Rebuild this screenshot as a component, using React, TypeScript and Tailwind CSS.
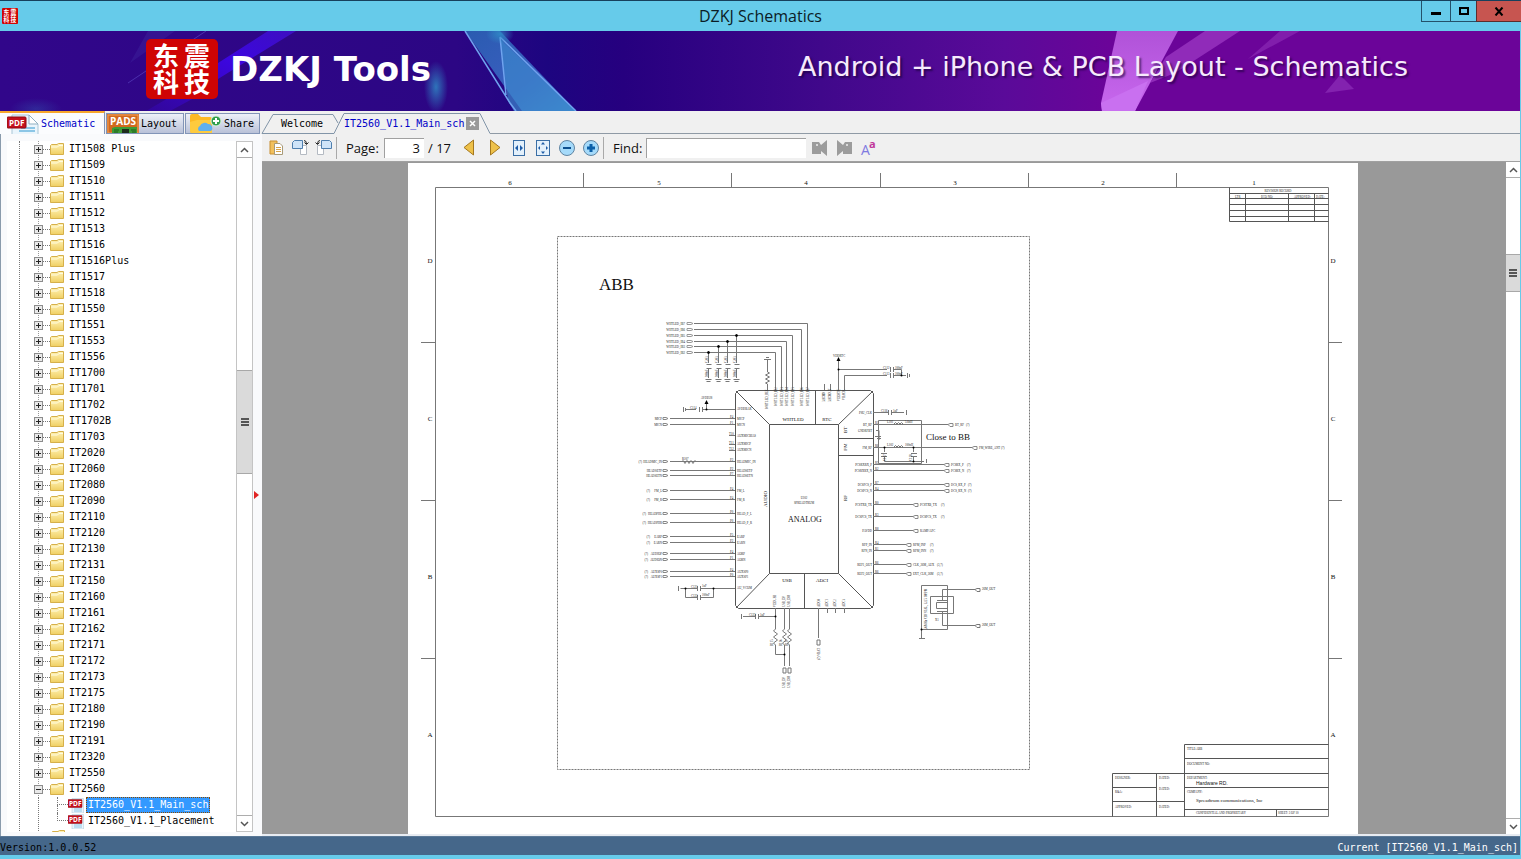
import React, { useState } from 'react';

const folders = [
  'IT1508 Plus', 'IT1509', 'IT1510', 'IT1511', 'IT1512', 'IT1513', 'IT1516', 'IT1516Plus', 'IT1517', 'IT1518',
  'IT1550', 'IT1551', 'IT1553', 'IT1556', 'IT1700', 'IT1701', 'IT1702', 'IT1702B', 'IT1703', 'IT2020',
  'IT2060', 'IT2080', 'IT2090', 'IT2110', 'IT2120', 'IT2130', 'IT2131', 'IT2150', 'IT2160', 'IT2161',
  'IT2162', 'IT2171', 'IT2172', 'IT2173', 'IT2175', 'IT2180', 'IT2190', 'IT2191', 'IT2320', 'IT2550', 'IT2560',
];
const files = ['IT2560_V1.1_Main_sch', 'IT2560_V1.1_Placement'];

const Seal = ({ className }: { className: string }) => (
  <svg viewBox="0 0 72 60" preserveAspectRatio="none" className={`overflow-visible ${className}`} aria-hidden="true">
    <rect width="72" height="60" rx="5" fill="#cf0404" />
    <g fill="#fff" fontSize="26" fontWeight="700" fontFamily="'Noto Sans CJK SC', sans-serif">
      <text x="7" y="27">东</text>
      <text x="38" y="27">震</text>
      <text x="7" y="53">科</text>
      <text x="38" y="53">技</text>
    </g>
  </svg>
);

const FolderIcon = () => (
  <svg width="15" height="14" viewBox="0 0 15 14" aria-hidden="true">
    <defs>
      <linearGradient id="fold" x1="0" y1="0" x2="0" y2="1">
        <stop offset="0" stopColor="#fff3b8" />
        <stop offset="1" stopColor="#f0cf62" />
      </linearGradient>
    </defs>
    <path d="M.5 12.5V3.5L1.5 2.5H7L8.500 1.500H13.500V12.500Z" fill="url(#fold)" stroke="#d6b04a" />
    <path d="M1 5H7.500L9 3.500H13" fill="none" stroke="#fffbe0" />
  </svg>
);

const PdfIcon = ({ big }: { big?: boolean }) => (
  <svg width={big ? 32 : 16} height={big ? 20 : 15} viewBox={big ? '0 0 32 20' : '0 0 32 30'} className="shrink-0" aria-hidden="true">
    <path d={big ? 'M5 1H22L31 10V30H5Z' : 'M8 1H31V30H8Z'} fill="#eaf5fc" stroke="#a9c6d6" />
    {big && <path d="M22 1L31 10H22Z" fill="#fff" stroke="#8fb0c2" />}
    <path d="M14 14H28M12 17H28M12 22H28M12 26H28" stroke="#8cc6e6" strokeWidth="2" />
    <rect x="0" y="3" width={big ? 19 : 28} height={big ? 11 : 16} rx="1" fill="#c4101c" stroke="#8d0a12" />
    <text x="2" y={big ? 12 : 16} fill="#fff" fontSize={big ? 8 : 13} fontWeight="700" fontFamily="'Open Sans', sans-serif">PDF</text>
  </svg>
);

const PadsIcon = () => (
  <svg width="32" height="20" viewBox="0 0 32 20" className="shrink-0" aria-hidden="true">
    <rect width="32" height="20" fill="#d2691e" />
    <rect x="1" y="1" width="30" height="18" fill="none" stroke="#f2a25a" />
    <text x="3" y="11" fill="#fff" fontSize="10" fontWeight="700" fontFamily="'Open Sans', sans-serif">PADS</text>
    <path d="M5 20V14L8 13H30V20Z" fill="#3d9a35" />
    <rect x="15" y="15" width="7" height="5" fill="#1c2b1c" />
    <path d="M7 16H12M7 18H11M24 16H29M25 18H29" stroke="#1f5f1d" />
  </svg>
);

const ShareIcon = () => (
  <svg width="32" height="19" viewBox="0 0 32 19" className="shrink-0" aria-hidden="true">
    <path d="M0 2Q0 0 2 0H8L11 3H20Q22 3 22 5V19H2Q0 19 0 17Z" fill="#fdb924" />
    <path d="M0 8L7 6H22V19H2Q0 19 0 17Z" fill="#fecb3e" />
    <path d="M9 17a3 3 0 0 1 1-5a5 5 0 0 1 8-2a4 4 0 0 1 3 7Z" fill="#5fb0ee" />
    <circle cx="26" cy="7" r="5" fill="#2f9e4a" stroke="#d9f2de" />
    <path d="M26 4V10M23 7H29" stroke="#fff" strokeWidth="2" />
  </svg>
);

const Chevron = ({ up }: { up?: boolean }) => (
  <svg width="9" height="6" viewBox="0 0 9 6" aria-hidden="true">
    <path d={up ? 'M1 5L4.500 1.500L8 5' : 'M1 1L4.500 4.500L8 1'} fill="none" stroke="#555" strokeWidth="1.500" />
  </svg>
);

const ScrollBar = ({ className, before, thumb }: { className: string; before: string; thumb: string }) => (
  <div className={`flex flex-col bg-white shrink-0 ${className}`}>
    <button aria-label="Scroll up" className="h-4 shrink-0 flex items-center justify-center border-b border-[#adadad]"><Chevron up /></button>
    <div className={before} />
    <div className={`${thumb} flex flex-col items-center justify-center gap-px bg-[#dadada] border-y border-[#a8a8a8] shrink-0`}>
      <i className="w-2 h-0.5 bg-[#555]" />
      <i className="w-2 h-0.5 bg-[#555]" />
      <i className="w-2 h-0.5 bg-[#555]" />
    </div>
    <div className="flex-1" />
    <button aria-label="Scroll down" className="h-4 shrink-0 flex items-center justify-center border-t border-[#adadad]"><Chevron /></button>
  </div>
);

const TitleBar = () => (
  <div className="h-[31px] shrink-0 grid grid-cols-[1fr_auto_1fr] bg-[#66cbea] border-t border-[#17405c]">
    <div className="flex items-center pl-0.5"><Seal className="w-4 h-4" /></div>
    <h1 className="self-center text-base leading-5 text-[#0b1c26]">DZKJ Schematics</h1>
    <div className="flex justify-end items-start">
      <button aria-label="Minimize" className="w-[29px] h-[21px] border-l border-b border-[#24516a] flex items-center justify-center">
        <svg width="10" height="9" aria-hidden="true"><rect y="5" width="10" height="3" fill="#000" /></svg>
      </button>
      <button aria-label="Maximize" className="w-[26px] h-[21px] border-l border-b border-[#24516a] flex items-center justify-center">
        <svg width="10" height="8" aria-hidden="true"><rect x="1" y="1" width="8" height="6" fill="none" stroke="#000" strokeWidth="2" /></svg>
      </button>
      <button aria-label="Close" className="w-[45px] h-[21px] border-l border-b border-[#5c2d2d] bg-[#c75550] flex items-center justify-center">
        <svg width="10" height="9" viewBox="0 0 10 9" aria-hidden="true"><path d="M1.500 .5L8.500 8.500M8.500 .5L1.500 8.500" stroke="#000" strokeWidth="2" /></svg>
      </button>
    </div>
  </div>
);

const Banner = () => (
  <header className="relative h-20 shrink-0 overflow-hidden bg-[#6b0499] flex items-center justify-between pl-[146px] pr-[112px]">
    <svg viewBox="0 0 1521 80" preserveAspectRatio="xMinYMin slice" className="absolute inset-0 w-full h-full" aria-hidden="true">
      <defs>
        <linearGradient id="sky">
          <stop offset="0" stopColor="#31068a" />
          <stop offset=".3" stopColor="#2c0684" />
          <stop offset=".36" stopColor="#1d0580" />
          <stop offset=".41" stopColor="#26007f" />
          <stop offset=".54" stopColor="#40088b" />
          <stop offset=".66" stopColor="#5a0a99" />
          <stop offset=".73" stopColor="#6b0499" />
          <stop offset="1" stopColor="#6b0499" />
        </linearGradient>
        <linearGradient id="shardL" x1="0" y1="0" x2="1" y2="1">
          <stop offset="0" stopColor="#2a5bb0" />
          <stop offset=".6" stopColor="#3a5fc0" />
          <stop offset="1" stopColor="#3f8fd0" />
        </linearGradient>
        <linearGradient id="shardR" x1="0" y1="0" x2="0" y2="1">
          <stop offset="0" stopColor="#b052d8" />
          <stop offset="1" stopColor="#c868ee" />
        </linearGradient>
        <linearGradient id="beam" x1="1" y1="0" x2="0" y2="1">
          <stop offset="0" stopColor="#3d0fc0" />
          <stop offset=".4" stopColor="#3c06e0" />
          <stop offset="1" stopColor="#3c06e0" stopOpacity=".2" />
        </linearGradient>
        <radialGradient id="glow">
          <stop offset="0" stopColor="#2f8fc8" stopOpacity=".8" />
          <stop offset="1" stopColor="#2f8fc8" stopOpacity="0" />
        </radialGradient>
      </defs>
      <rect width="1521" height="80" fill="url(#sky)" />
      <path d="M268 0H296L218 48V32ZM146 80L170 66H196L170 80Z" fill="url(#beam)" />
      <path d="M148 0H175L130 32Z" fill="#3a1c98" opacity=".6" />
      <path d="M206 0L128 52" stroke="#4c2fae" />
      <ellipse cx="436" cy="56" rx="12" ry="26" fill="url(#glow)" />
      <ellipse cx="36" cy="78" rx="26" ry="11" fill="url(#glow)" opacity=".3" />
      <path d="M465 0H500L576 80H522Z" fill="url(#shardL)" />
      <path d="M500 8L508 70L514 80H576Z" fill="#3c86cc" opacity=".7" />
      <path d="M465 0L510 72L516 80M500 6L576 80M500 6L506 64" fill="none" stroke="#6fa3ee" strokeWidth="1.500" />
      <ellipse cx="500" cy="3" rx="14" ry="10" fill="url(#glow)" />
      <path d="M1117 0H1178L1135 80H1102L1101 72Z" fill="url(#shardR)" />
      <path d="M1101 72L1148 50L1135 80H1102Z" fill="#c970f0" />
      <path d="M1205 0H1240L1175 42L1150 52L1166 26Z" fill="#a03cc6" opacity=".7" />
      <path d="M1280 0H1300L1248 28Z" fill="#8a2ab4" opacity=".7" />
      <path d="M1340 44L1354 58L1325 62Z" fill="#8a2ab4" opacity=".8" />
    </svg>
    <div className="relative flex items-center gap-3 pb-1">
      <Seal className="w-[72px] h-[60px]" />
      <span className="font-['DejaVu_Sans',sans-serif] font-bold text-[34px] leading-10 text-white">DZKJ Tools</span>
    </div>
    <p className="relative font-['DejaVu_Sans',sans-serif] text-[27px] leading-8 text-[#f6eafc] whitespace-nowrap [text-shadow:2px_2px_2px_rgba(20,0,50,.6)] pb-2">
      Android + iPhone &amp; PCB Layout - Schematics
    </p>
  </header>
);

const sideTabs = [
  { name: 'Schematic', icon: <PdfIcon big />, width: 'w-[105px]' },
  { name: 'Layout', icon: <PadsIcon />, width: 'w-[78px]' },
  { name: 'Share', icon: <ShareIcon />, width: 'w-[75px]' },
];

const Sidebar = () => {
  const [tab, setTab] = useState('Schematic');
  const [selected, setSelected] = useState(files[0]);

  return (
    <aside className="w-[262px] shrink-0 flex flex-col bg-[#f0f0f0]">
      <div className="flex items-end gap-px h-[23px] shrink-0">
        {sideTabs.map((t) => (
          <button
            key={t.name}
            onClick={() => setTab(t.name)}
            className={`${t.width} flex items-center overflow-hidden whitespace-nowrap font-['DejaVu_Sans_Mono',monospace] text-[10px] leading-4 ${tab === t.name
              ? 'h-[23px] gap-0.5 pl-[7px] bg-[#fbfcfe] border-t-2 border-[#f7a62c] border-r border-r-[#8295b8] text-[#0000c8]'
              : 'h-[21px] gap-0.5 bg-linear-to-b from-[#eef1f8] to-[#b9c1d8] border border-[#8295b8] text-black'
              } ${t.name === 'Share' ? 'pl-1' : ''}`}
          >
            {t.icon}
            <span>{t.name}</span>
          </button>
        ))}
      </div>
      <div className="flex flex-1 min-h-0 border-l border-[#8a9bac] bg-[#f9fafc] pt-[7px] pb-1">
        <div className="flex-1 min-w-0 ml-1.5 bg-white overflow-hidden font-['DejaVu_Sans_Mono',monospace] text-[10px] leading-4 text-black">
          <div className="ml-3 border-l border-dotted border-[#777]">
            <ul>
              {folders.map((name) => {
                const open = name === 'IT2560';
                return (
                  <li key={name} className="flex items-center h-4 ml-[18px] bg-[linear-gradient(#999_50%,transparent_50%)] bg-[size:1px_2px] bg-repeat-y">
                    <button aria-label={`${open ? 'Collapse' : 'Expand'} ${name}`} className="w-[9px] h-[9px] -ml-1 mt-px shrink-0 bg-[#e9e9e9] border border-[#8c8c8c] flex items-center justify-center">
                      <svg width="5" height="5" aria-hidden="true"><path d={open ? 'M0 2.500H5' : 'M0 2.500H5M2.500 0V5'} stroke="#222" /></svg>
                    </button>
                    <i className="w-[7px] border-t border-dotted border-[#777]" />
                    <FolderIcon />
                    <span className="ml-1">{name}</span>
                  </li>
                );
              })}
            </ul>
            <ul className="ml-[18px] border-l border-dotted border-[#777]">
              {files.map((name) => (
                <li key={name} className="flex items-center h-4 ml-[18px]">
                  <i className="w-[11px] h-4 shrink-0 flex flex-col">
                    <i className="h-2 border-l border-b border-dotted border-[#777]" />
                    <i className={name === files[0] ? 'h-2 border-l border-dotted border-[#777]' : 'h-2'} />
                  </i>
                  <PdfIcon />
                  <button
                    onClick={() => setSelected(name)}
                    className={`ml-0.5 px-px h-4 leading-[14px] border border-dotted ${selected === name ? 'bg-[#3399ff] text-white border-[#8a4a00]' : 'border-transparent'}`}
                  >
                    {name}
                  </button>
                </li>
              ))}
              <li className="h-1 overflow-hidden pl-3"><FolderIcon /></li>
            </ul>
          </div>
        </div>
        <ScrollBar className="w-[17px] border border-[#c4c4c4]" before="h-[212px]" thumb="h-[104px]" />
        <div className="w-[9px] shrink-0 flex items-center">
          <svg width="5" height="8" viewBox="0 0 5 8" className="ml-px mt-4" aria-hidden="true"><path d="M0 0L5 4L0 8Z" fill="#e02424" /></svg>
        </div>
      </div>
    </aside>
  );
};

const DocTabs = () => (
  <div className="flex items-end h-[23px] shrink-0 font-['DejaVu_Sans_Mono',monospace] text-[10px] leading-4">
    <button className="relative w-[72px] h-[21px] pl-[19px] text-left text-black">
      <svg viewBox="0 0 72 21" className="absolute inset-0 overflow-visible" aria-hidden="true">
        <path d="M0 20.500L11 1.500H71L76 10" fill="none" stroke="#8295a8" />
        <path d="M0 20.500H72" stroke="#8295a8" />
      </svg>
      <span className="relative">Welcome</span>
    </button>
    <div className="relative w-[156px] h-[21px] flex items-center gap-px pl-[10px] text-[#0000c8]">
      <svg viewBox="0 0 156 21" className="absolute inset-0" aria-hidden="true">
        <path d="M0 20.500L10 .5H146L156 20.500" fill="none" stroke="#8295a8" />
      </svg>
      <button className="relative">IT2560_V1.1_Main_sch</button>
      <button aria-label="Close tab" className="relative ml-px w-[13px] h-[13px] bg-[#999] flex items-center justify-center">
        <svg width="7" height="7" aria-hidden="true"><path d="M1 1L6 6M6 1L1 6" stroke="#fff" strokeWidth="1.500" /></svg>
      </button>
    </div>
    <div className="flex-1 border-b border-[#8f9aa5]" />
  </div>
);

const iconBtn = 'w-6 h-6 flex items-center justify-center shrink-0';

const Toolbar = () => {
  const [page, setPage] = useState('3');
  const [query, setQuery] = useState('');

  return (
    <div className="flex items-center h-[27px] shrink-0 pl-0.5 bg-[#f0f0f0] text-[13px] leading-5 text-[#111]">
      <button aria-label="Open file" className={iconBtn}>
        <svg width="16" height="16" viewBox="0 0 16 16" aria-hidden="true">
          <path d="M2 1H9V14H2Z" fill="#f2c05c" stroke="#c88f30" />
          <path d="M6.500 3.500H12L14.500 6V14.500H6.500Z" fill="#fff" stroke="#a89a78" />
          <path d="M8 7.500H13M8 9.500H13M8 11.500H13" stroke="#d9a54a" />
        </svg>
      </button>
      <button aria-label="Rotate right" className={iconBtn}>
        <svg width="18" height="17" viewBox="0 0 18 17" aria-hidden="true">
          <path d="M9.500 6.500H15.500V15.500H9.500Z" fill="#fff" stroke="#b4bac2" />
          <path d="M3.500 1.500H11.500V9.500H1.500V3.500Z" fill="#cfe4f8" stroke="#4f7fae" />
          <path d="M13 1.500Q15.500 1.500 15.500 5M13.500 3.500L15.500 5.500L17.500 3.500" fill="none" stroke="#222" />
        </svg>
      </button>
      <button aria-label="Rotate left" className={iconBtn}>
        <svg width="18" height="17" viewBox="0 0 18 17" aria-hidden="true">
          <path d="M2.500 6.500H8.500V15.500H2.500Z" fill="#fff" stroke="#b4bac2" />
          <path d="M6.500 1.500H14.500L16.500 3.500V9.500H6.500Z" fill="#cfe4f8" stroke="#4f7fae" />
          <path d="M5 1.500Q2.500 1.500 2.500 5M.5 3.500L2.500 5.500L4.500 3.500" fill="none" stroke="#222" />
        </svg>
      </button>
      <div className="w-px h-[22px] bg-[#a9a9a9]" />
      <label htmlFor="page" className="w-[38px] ml-[9px]">Page:</label>
      <input
        id="page"
        value={page}
        onChange={(e) => setPage(e.target.value)}
        className="w-10 h-5 bg-white border-l border-t border-[#a0a0a0] text-right pr-1 outline-none"
      />
      <span className="w-[29px] ml-1 whitespace-nowrap">/ 17</span>
      <button aria-label="Previous page" className={iconBtn}>
        <svg width="12" height="17" viewBox="0 0 12 17" aria-hidden="true"><path d="M10.500 1V16L1 8.500Z" fill="#eec14a" stroke="#a5781e" /></svg>
      </button>
      <button aria-label="Next page" className={`${iconBtn} ml-0.5`}>
        <svg width="12" height="17" viewBox="0 0 12 17" aria-hidden="true"><path d="M1.500 1V16L11 8.500Z" fill="#eec14a" stroke="#a5781e" /></svg>
      </button>
      <button aria-label="Fit width" className={iconBtn}>
        <svg width="12" height="16" viewBox="0 0 12 16" aria-hidden="true">
          <rect x=".5" y=".5" width="11" height="15" fill="#e3f0fb" stroke="#3a6ea5" />
          <path d="M5 5V11L2 8ZM7 5V11L10 8Z" fill="#1e5ca8" />
        </svg>
      </button>
      <button aria-label="Fit page" className={iconBtn}>
        <svg width="14" height="16" viewBox="0 0 14 16" aria-hidden="true">
          <rect x=".5" y=".5" width="13" height="15" fill="#e3f0fb" stroke="#3a6ea5" />
          <path d="M7 2L9 4.500H5ZM7 14L9 11.500H5ZM2 8L4 6V10ZM12 8L10 6V10Z" fill="#1e5ca8" />
        </svg>
      </button>
      <button aria-label="Zoom out" className={iconBtn}>
        <svg width="16" height="16" viewBox="0 0 16 16" aria-hidden="true">
          <circle cx="8" cy="8" r="7.500" fill="#a5dafa" stroke="#5f84a2" />
          <path d="M4 8H12" stroke="#0b4f8f" strokeWidth="2" />
        </svg>
      </button>
      <button aria-label="Zoom in" className={iconBtn}>
        <svg width="16" height="16" viewBox="0 0 16 16" aria-hidden="true">
          <circle cx="8" cy="8" r="7.500" fill="#a5dafa" stroke="#5f84a2" />
          <path d="M4 8H12M8 4V12" stroke="#0b5fa8" strokeWidth="3" />
        </svg>
      </button>
      <div className="w-px h-[22px] bg-[#a9a9a9]" />
      <label htmlFor="find" className="w-[33px] ml-[9px]">Find:</label>
      <input
        id="find"
        value={query}
        onChange={(e) => setQuery(e.target.value)}
        className="w-40 h-5 bg-white border-l border-t border-[#a0a0a0] px-1 outline-none"
      />
      <button aria-label="Find previous" className={`${iconBtn} ml-0.5`}>
        <svg width="16" height="16" viewBox="0 0 16 16" aria-hidden="true">
          <path d="M0 2H7L9 5L15 0V16L9 11V14H0Z" fill="#9c9c9c" /><circle cx="5" cy="5" r="1" fill="#eee" />
        </svg>
      </button>
      <button aria-label="Find next" className={iconBtn}>
        <svg width="16" height="16" viewBox="0 0 16 16" aria-hidden="true">
          <path d="M16 2H9L7 5L1 0V16L7 11V14H16Z" fill="#9c9c9c" /><circle cx="11" cy="5" r="1" fill="#eee" />
        </svg>
      </button>
      <button aria-label="Match case" className={iconBtn}>
        <svg width="15" height="16" viewBox="0 0 15 16" className="overflow-visible" aria-hidden="true">
          <text x="0" y="15" fontSize="14" fill="#7f7ae0" fontFamily="'Open Sans', sans-serif">A</text>
          <text x="8" y="8" fontSize="11" fontWeight="700" fill="#c0379a" fontFamily="'Open Sans', sans-serif">a</text>
        </svg>
      </button>
    </div>
  );
};

/* ---- schematic sheet ---- */

type Net = { y: number; x: number; pin: string; net: string; ref?: string; refX?: number };

const ledNets = [
  { y: 323.5, x: 807.5, name: 'WHTLED_IB7' },
  { y: 329.5, x: 801.5, name: 'WHTLED_IB6' },
  { y: 335.5, x: 792.5, name: 'WHTLED_IB5' },
  { y: 341.5, x: 786.5, name: 'WHTLED_IB4' },
  { y: 346.5, x: 781.5, name: 'WHTLED_IB3' },
  { y: 352.5, x: 775.5, name: 'WHTLED_IB2' },
];

const leftNets: Net[] = [
  { y: 418.5, x: 668, pin: 'MICP', net: 'MICP' },
  { y: 424.5, x: 668, pin: 'MICN', net: 'MICN' },
  { y: 461.5, x: 668, pin: 'HEADMIC_IN', net: 'HEADMIC_IN', ref: '(7)', refX: 642 },
  { y: 470.5, x: 668, pin: 'HEADSETP', net: 'HEADSETP' },
  { y: 475.5, x: 668, pin: 'HEADSETN', net: 'HEADSETN' },
  { y: 490.5, x: 668, pin: 'FM_L', net: 'FM_L', ref: '(7)', refX: 650 },
  { y: 499.5, x: 668, pin: 'FM_R', net: 'FM_R', ref: '(7)', refX: 650 },
  { y: 513.5, x: 668, pin: 'HEAD_P_L', net: 'HEADPHL', ref: '(7)', refX: 646 },
  { y: 522.5, x: 668, pin: 'HEAD_P_R', net: 'HEADPHR', ref: '(7)', refX: 646 },
  { y: 536.5, x: 668, pin: 'EARP', net: 'EARP', ref: '(7)', refX: 650 },
  { y: 542.5, x: 668, pin: 'EARN', net: 'EARN', ref: '(7)', refX: 650 },
  { y: 553.5, x: 668, pin: 'AORP', net: 'AUDIOP', ref: '(7)', refX: 648 },
  { y: 559.5, x: 668, pin: 'AORN', net: 'AUDION', ref: '(7)', refX: 648 },
  { y: 571.5, x: 668, pin: 'AUXSP0', net: 'AUXSP0', ref: '(7)', refX: 648 },
  { y: 576.5, x: 668, pin: 'AUXSP1', net: 'AUXSP1', ref: '(7)', refX: 648 },
];

const rightNets: Net[] = [
  { y: 424.5, x: 948, pin: 'BT_RF', net: 'BT_RF', ref: '(7)', refX: 966 },
  { y: 447.5, x: 972, pin: 'FM_RF', net: 'FM_WIRE_ANT', ref: '(7)', refX: 1001 },
  { y: 464.5, x: 944, pin: 'PCSRXRX_P', net: 'PCSRX_P', ref: '(7)', refX: 967 },
  { y: 470.5, x: 944, pin: 'PCSRXRX_N', net: 'PCSRX_N', ref: '(7)', refX: 967 },
  { y: 484.5, x: 944, pin: 'DCSPCS_P', net: 'DCS_RX_P', ref: '(7)', refX: 968 },
  { y: 490.5, x: 944, pin: 'DCSPCS_N', net: 'DCS_RX_N', ref: '(7)', refX: 968 },
  { y: 504.5, x: 913, pin: 'PCSTXB_TX', net: 'PCSTXB_TX', ref: '(7)', refX: 941 },
  { y: 516.5, x: 913, pin: 'DCSPCS_TX', net: 'DCSPCS_TX', ref: '(7)', refX: 941 },
  { y: 530.5, x: 913, pin: 'PAVDD', net: 'RAMP/APC' },
  { y: 544.5, x: 906, pin: 'RFP_IN', net: 'RFM_INP', ref: '(7)', refX: 930 },
  { y: 550.5, x: 906, pin: 'RFN_IN', net: 'RFM_INN', ref: '(7)', refX: 930 },
  { y: 564.5, x: 906, pin: 'REF1_OUT', net: 'CLK_26M_AUX', ref: '(3,7)', refX: 937 },
  { y: 573.5, x: 906, pin: 'REF2_OUT', net: 'EXT_CLK_26M', ref: '(3,7)', refX: 937 },
];

const caps = [708.5, 718.5, 727.5, 736.5];
const capTops = [352.5, 346.5, 341.5, 335.5];

const columns = [['6', 510], ['5', 659], ['4', 806], ['3', 955], ['2', 1103], ['1', 1254]] as const;
const rows = [['D', 263], ['C', 421], ['B', 579], ['A', 737]] as const;

/* vertical pin label, read bottom to top */
const Up = ({ x, y, children }: { x: number; y: number; children: string }) => (
  <text x={x} y={y} transform={`rotate(-90 ${x} ${y})`}>{children}</text>
);

const Sheet = () => (
  <svg viewBox="408 163 950 671" width="950" className="bg-white shrink-0 mx-auto" role="img" aria-label="ABB schematic, page 3">
    <g fill="none" stroke="#777">
      <path d="M435.500 187.500H1328.500V816.500H435.500Z" />
      <path d="M583.500 173V187M731.500 173V187M880.500 173V187M1028.500 173V187M1176.500 173V187" />
      <path d="M421 342.500H435M421 500.500H435M421 658.500H435M1328 342.500H1342M1328 500.500H1342M1328 658.500H1342" />
      <path d="M557.500 236.500H1029.500V769.500H557.500Z" strokeDasharray="2 1" />
      <path d="M1229.500 187.500V221.500H1328.500M1229.500 193.500H1328.500M1229.500 198.500H1328.500M1229.500 204.500H1328.500M1229.500 210.500H1328.500M1229.500 216.500H1328.500M1245.500 193V221M1288.500 193V221M1314.500 193V221" stroke="#555" />
      <path d="M1184.500 816.500V744.500H1328.500M1184.500 758.500H1328.500M1112.500 816.500V773.500H1328.500M1112.500 787.500H1156M1184.500 787.500H1328.500M1112.500 801.500H1184M1184.500 809.500H1328.500M1156.500 773.500V816.500M1276.500 809.500V816.500" stroke="#555" />
    </g>

    <g fontFamily="'Liberation Serif', serif" fill="#111">
      <g fontSize="7" textAnchor="middle">
        {columns.map(([n, x]) => <text key={n} x={x} y="185">{n}</text>)}
        {rows.map(([n, y]) => <text key={n} x="430" y={y}>{n}</text>)}
        {rows.map(([n, y]) => <text key={n} x="1333" y={y}>{n}</text>)}
      </g>
      <text x="599" y="290" fontSize="17">ABB</text>
      <text x="926" y="440" fontSize="9">Close to BB</text>
      <text x="788" y="522" fontSize="8">ANALOG</text>
      <g fontSize="5" textAnchor="middle">
        <text x="793" y="421">WHTLED</text>
        <text x="827" y="421">RTC</text>
        <text x="787" y="582">USB</text>
        <text x="822" y="582">ADCI</text>
        <Up x={847} y={430}>BT</Up>
        <Up x={847} y={447}>FM</Up>
        <Up x={847} y={498}>RF</Up>
        <Up x={767} y={499}>AUDIO</Up>
      </g>
      <g fontSize="3" fill="#222">
        <text x="1278" y="192" textAnchor="middle">REVISION RECORD</text>
        <text x="1235" y="198">LTR</text>
        <text x="1261" y="198">ECO NO:</text>
        <text x="1294" y="198">APPROVED:</text>
        <text x="1316" y="198">DATE:</text>
        <text x="1187" y="750">TITLE:ABB</text>
        <text x="1187" y="765">DOCUMENT NO:</text>
        <text x="1187" y="779">DEPARTMENT:</text>
        <text x="1187" y="793">COMPANY:</text>
        <text x="1196" y="814">CONFIDENTIAL AND PROPRIETARY</text>
        <text x="1278" y="814">SHEET: 3  OF  10</text>
        <text x="1115" y="779">DESIGNER:</text>
        <text x="1115" y="793">R&amp;A:</text>
        <text x="1115" y="808">APPROVED:</text>
        <text x="1159" y="779">DATED:</text>
        <text x="1159" y="790">DATED:</text>
        <text x="1159" y="808">DATED:</text>
        <text x="804" y="499" textAnchor="middle">U102</text>
        <text x="804" y="504" textAnchor="middle">SPREADTRUM</text>
      </g>
      <text x="1196" y="785" fontSize="5" fontFamily="'Liberation Sans', sans-serif">Hardware RD.</text>
      <text x="1196" y="802" fontSize="5">Spreadtrum communications, Inc</text>
    </g>

    {/* chip body */}
    <g fill="none" stroke="#555">
      <path d="M738.500 390.500H870.500L873.500 393.500V605.500L870.500 608.500H738.500L735.500 605.500V393.500Z" />
      <path d="M769.500 424.500H838.500V573.500H769.500Z" />
      <path d="M736 391L769.500 424.500M873 391L838.500 424.500M736 608L769.500 573.500M873 608L838.500 573.500" />
      <path d="M815.500 390V424M838.500 438.500H873M838.500 455.500H873M804.500 573V608" />
    </g>

    <g fill="none" stroke="#777" fontFamily="'Liberation Serif', serif" fontSize="3">
      {ledNets.map((n) => (
        <g key={n.name}>
          <path d={`M694 ${n.y}H${n.x}V390`} />
          <path d={`M687 ${n.y - 1}h4l2 1l-2 1h-4z`} stroke="#999" />
          <text x="685" y={n.y + 1} textAnchor="end" fill="#222" stroke="none">{n.name}</text>
          <g fill="#333" stroke="none"><Up x={n.x + 1} y={406}>{n.name}</Up></g>
        </g>
      ))}
      {leftNets.map((n) => (
        <g key={n.y}>
          <path d={`M${n.x + 2} ${n.y}H735`} />
          <path d={`M${n.x - 5} ${n.y - 1}h3l2 1l-2 1h-3z`} stroke="#888" />
          <g fill="#222" stroke="none">
            <text x={n.x - 6} y={n.y + 1} textAnchor="end">{n.net}</text>
            <text x="737" y={n.y + 1}>{n.pin}</text>
            <text x="730" y={n.y - 1}>P{n.y % 9 | 0}</text>
            {n.ref && <text x={n.refX} y={n.y + 1} textAnchor="end">{n.ref}</text>}
          </g>
        </g>
      ))}
      {rightNets.map((n) => (
        <g key={n.y}>
          <path d={`M873 ${n.y}H${n.x}`} />
          <path d={`M${n.x} ${n.y}l2 -1h3v3h-3z`} stroke="#888" />
          <g fill="#222" stroke="none">
            <text x={n.x + 7} y={n.y + 1}>{n.net}</text>
            <text x="872" y={n.y + 1} textAnchor="end">{n.pin}</text>
            <text x="875" y={n.y - 1}>R{n.y % 9 | 0}</text>
            {n.ref && <text x={n.refX} y={n.y + 1}>{n.ref}</text>}
          </g>
        </g>
      ))}

      {/* decoupling caps under the led nets */}
      {caps.map((x, i) => (
        <g key={x}>
          <path d={`M${x} ${capTops[i]}V363M${x - 2} 364.500h5M${x - 2} 368.500h5M${x} 369V378M${x - 3} 379.500h6M${x - 2} 381.500h4`} />
          <circle cx={x} cy={capTops[i]} r="1" fill="#000" stroke="#000" />
          <g fill="#333" stroke="none">
            <Up x={x - 1} y={363}>C203</Up>
            <Up x={x - 1} y={377}>100nF</Up>
          </g>
        </g>
      ))}
      <path d="M767.500 390V384l-2 -1l4 -2l-4 -2l4 -2l-4 -2l4 -2l-2 -1V360M764 359.500h7M766 357.500h3" />
      <path d="M706.500 402V409.500M735 409.500H702M696 409.500H686M702.500 407v5M699.500 407v5M683.500 407v5M685.500 408v3" />
      <path d="M729 435.500h6M729 444.500h6M729 450.500h6" />
      <path d="M682 461.500l1 -1l2 3l2 -3l2 3l2 -3l2 3l2 -3l1 1" />

      {/* supplies on the rtc side */}
      <path d="M838.500 361V390M838.500 369.500H887M844.500 390V375.500H887M890.500 367v5M893.500 367v5M890.500 373v5M893.500 373v5M894 369.500H901.500V375.500H894M901.500 375.500H906M907.500 373v5M909.500 374v3M824.500 384v6M830.500 384v6" />
      <path d="M836.500 361L838.500 357L840.500 361ZM704.500 404L706.500 400L708.500 404Z" fill="#000" stroke="none" />
      <path d="M873 412.500H888M888.500 410v5M891.500 410v5M892 412.500H904M906.500 410v5" />

      {/* antenna matching */}
      <path d="M878.500 420.500H921.500V463.500H878.500ZM876 430.500H879V440M875 436.500h6M877 438.500h4" />
      <path d="M894 424q1.500 -3 3 0q1.500 -3 3 0q1.500 -3 3 0M894 447q1.500 -3 3 0q1.500 -3 3 0q1.500 -3 3 0" />
      <path d="M884.500 447V452M881 453.500h6M881 456.500h6M884.500 457V461.500H924M913.500 447V452M911 453.500h6M911 456.500h6M913.500 457V461M926.500 459v4" />

      {/* usb and adc side */}
      <path d="M735 588.500H701M698 588.500H685.500V597.500H698M701 597.500H713.500V588.500M697.500 586v5M700.500 586v5M697.500 595v5M700.500 595v5M678.500 586v5M680.500 588.500h5" />
      <path d="M775.500 608V629l-2 2l4 3l-4 3l4 3l-4 3l2 2V654.500H784M784.500 608V629l-2 2l4 3l-4 3l4 3l-4 3l2 2V666M789.500 608V629l-2 2l4 3l-4 3l4 3l-4 3l2 2V666" />
      <path d="M775 616.500H759M756 616.500H743M758.500 614v5M755.500 614v5M741.500 614v5M783 668h3v5h-3zM788 668h3v5h-3z" />
      <path d="M818.500 608V638M817 640h3v5h-3zM827.500 608v5M835.500 608v5M844.500 608v5" />

      {/* crystal */}
      <path d="M921.500 585.500H947.500V629.500H921.500ZM930.500 596.500H953.500V613.500H930.500ZM936.500 602.500H947.500V608.500H936.500ZM942.500 600V589.500H975M942.500 612V625.500H975M937 600.500h11M937 611.500h11M921.500 629V638M919 638.500h6" />
      <path d="M975 589.500l2 -1h3v3h-3zM975 625.500l2 -1h3v3h-3z" />

      <g fill="#000" stroke="none">
        {[[838.5, 369.5], [901.5, 375.5], [706.5, 409.5], [884.5, 447.5], [913.5, 447.5], [913.5, 461.5], [685.5, 588.5], [713.5, 588.5], [775.5, 616.5], [784.5, 654.5], [921.5, 629.5]].map(([x, y]) => (
          <circle key={`${x}-${y}`} cx={x} cy={y} r="1" />
        ))}
      </g>

      <g fill="#222" stroke="none">
        <text x="701" y="399">AVDD28</text>
        <text x="833" y="357">VDDRTC</text>
        <text x="690" y="409">C114</text>
        <text x="737" y="410">AVDDBAK</text>
        <text x="737" y="437">AUXMICBIAS</text>
        <text x="737" y="445">AUXMICP</text>
        <text x="737" y="451">AUXMICN</text>
        <text x="729" y="435">T10</text>
        <text x="729" y="444">T11</text>
        <text x="729" y="450">T12</text>
        <text x="682" y="460">R107</text>
        <text x="883" y="369">C112</text>
        <text x="895" y="369">100nF</text>
        <text x="883" y="375">C113</text>
        <text x="895" y="375">100nF</text>
        <text x="872" y="414" textAnchor="end">PSU_CLK</text>
        <text x="881" y="412">C116</text>
        <text x="893" y="412">1uF</text>
        <text x="872" y="432" textAnchor="end">GNDRFBT</text>
        <text x="887" y="423">L101</text>
        <text x="905" y="423">5.6nH</text>
        <text x="887" y="446">L102</text>
        <text x="905" y="446">100nH</text>
        <text x="737" y="589">AU_VCOM</text>
        <text x="691" y="588">C121</text>
        <text x="702" y="587">1uF</text>
        <text x="691" y="597">C122</text>
        <text x="702" y="596">100nF</text>
        <text x="749" y="616">C123</text>
        <text x="760" y="616">1uF</text>
        <text x="982" y="590">26M_OUT</text>
        <text x="982" y="626">26M_OUT</text>
        <text x="935" y="621">X1</text>
        <Up x={768} y={409}>WHTLED_REF</Up>
        <Up x={825} y={402}>32KXIN</Up>
        <Up x={831} y={402}>32KXOUT</Up>
        <Up x={840} y={401}>VDDRTC</Up>
        <Up x={845} y={400}>VBACK</Up>
        <Up x={776} y={607}>VDDUSB</Up>
        <Up x={785} y={607}>USB_DP</Up>
        <Up x={790} y={607}>USB_DM</Up>
        <Up x={820} y={607}>ADC0</Up>
        <Up x={828} y={607}>ADC1</Up>
        <Up x={836} y={607}>ADC2</Up>
        <Up x={845} y={607}>ADC3</Up>
        <Up x={773} y={646}>R115</Up>
        <Up x={782} y={646}>R116</Up>
        <Up x={788} y={646}>R117</Up>
        <Up x={785} y={688}>USB_DP</Up>
        <Up x={790} y={688}>USB_DM</Up>
        <Up x={820} y={660}>(7) VBAT</Up>
        <Up x={886} y={461}>C117</Up>
        <Up x={912} y={461}>C118</Up>
        <Up x={927} y={629}>26MHz CRYSTAL, 3225 10PPM</Up>
      </g>
    </g>
  </svg>
);

export default function App() {
  return (
    <div className="h-screen flex flex-col overflow-hidden bg-[#f0f0f0] font-['Open_Sans',sans-serif] border-b-4 border-[#66cbea]">
      <TitleBar />
      <div className="flex flex-col flex-1 min-h-0 border-r border-[#66cbea]">
        <Banner />
        <div className="flex flex-1 min-h-0">
          <Sidebar />
          <main className="flex-1 min-w-0 flex flex-col">
            <DocTabs />
            <Toolbar />
            <div className="flex flex-1 min-h-0 border-t border-[#a0a0a0]">
              <div className="flex-1 min-w-0 overflow-hidden bg-[#999] pt-px pr-0.5 flex items-start">
                <Sheet />
              </div>
              <ScrollBar className="w-[14px]" before="h-[76px]" thumb="h-[38px]" />
            </div>
            <div className="h-0.5 shrink-0 bg-[#e8ecf2]" />
          </main>
        </div>
        <footer className="h-[19px] shrink-0 flex items-end justify-between pr-0.5 bg-[#45678a] border-t border-[#5a7896] font-['DejaVu_Sans_Mono',monospace] text-[10px] leading-[14px]">
          <span className="text-black">Version:1.0.0.52</span>
          <span className="text-white">Current [IT2560_V1.1_Main_sch]</span>
        </footer>
      </div>
    </div>
  );
}
